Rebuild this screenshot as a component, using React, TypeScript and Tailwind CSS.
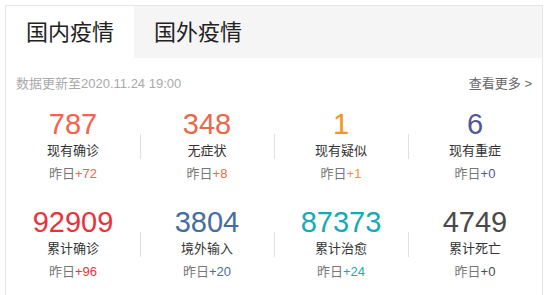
import React from "react";

type Stat = {
  label: string;
  value: string;
  delta: string;
  color: string;
};

const rows: Stat[][] = [
  [
    { label: "现有确诊", value: "787", delta: "+72", color: "text-[#f8614e]" },
    { label: "无症状", value: "348", delta: "+8", color: "text-[#e8694a]" },
    { label: "现有疑似", value: "1", delta: "+1", color: "text-[#f7931e]" },
    { label: "现有重症", value: "6", delta: "+0", color: "text-[#545499]" },
  ],
  [
    { label: "累计确诊", value: "92909", delta: "+96", color: "text-[#e8333a]" },
    { label: "境外输入", value: "3804", delta: "+20", color: "text-[#476da0]" },
    { label: "累计治愈", value: "87373", delta: "+24", color: "text-[#17a9b5]" },
    { label: "累计死亡", value: "4749", delta: "+0", color: "text-[#4a4a4a]" },
  ],
];

const font = "font-['Liberation_Sans','Noto_Sans_CJK_SC',sans-serif]";

export default function App() {
  return (
    <div className={`h-[295px] overflow-hidden bg-white pl-[5px] pt-[5px] ${font}`}>
      <div className="h-[300px] w-[538px] border border-[#e5e5e5]">
        {/* Tabs */}
        <div className="flex h-[52px] bg-[#f5f5f5]">
          <div className="flex w-[128px] items-center justify-center bg-white text-[22px] text-[#222]">
            国内疫情
          </div>
          <div className="flex w-[128px] items-center justify-center text-[22px] text-[#222]">
            国外疫情
          </div>
        </div>

        {/* Update line */}
        <div className="mt-[17px] flex items-center justify-between px-[10px] text-[13px] leading-[17px]">
          <span className="text-[#a9a9a9]">数据更新至2020.11.24 19:00</span>
          <span className="text-[#666]">查看更多 &gt;</span>
        </div>

        {/* Stats */}
        <div className="mt-[16px] flex flex-col gap-[22px]">
          {rows.map((row, ri) => (
            <div key={ri} className="grid grid-cols-4">
              {row.map((s, i) => (
                <div key={s.label} className="relative flex flex-col items-center">
                  {i > 0 && (
                    <span className="absolute left-0 top-[26px] h-[25px] w-px bg-[#e0e0e0]" />
                  )}
                  <div className={`text-[29px] leading-[32px] ${s.color}`}>{s.value}</div>
                  <div className="mt-[1px] text-[13px] leading-[20px] text-[#333]">{s.label}</div>
                  <div className="mt-[3px] text-[13px] leading-[20px] text-[#777]">
                    昨日<span className={s.color}>{s.delta}</span>
                  </div>
                </div>
              ))}
            </div>
          ))}
        </div>
      </div>
    </div>
  );
}
